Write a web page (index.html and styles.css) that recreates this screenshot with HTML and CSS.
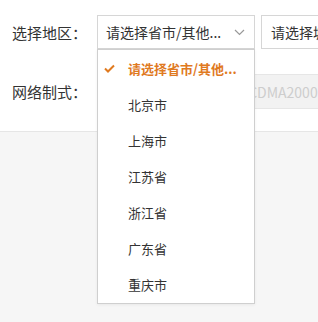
FILE: index.html
```html
<!DOCTYPE html>
<html lang="zh-CN">
<head>
<meta charset="utf-8">
<link rel="stylesheet" href="styles.css">
</head>
<body>
<div class="panel">
  <div class="row row-region">
    <span class="label">选择地区：</span>
    <div class="select select-open">
      <span class="select-text">请选择省市/其他...</span>
      <svg class="chevron" width="11" height="7" viewBox="0 0 11 7"><path d="M1 1 L5.5 5.5 L10 1" fill="none" stroke="#999" stroke-width="1.2"/></svg>
      <ul class="dropdown">
        <li class="option selected">
          <svg class="check" width="11" height="9" viewBox="0 0 11 9"><path d="M1 4.5 L4 7.5 L10 1.5" fill="none" stroke="#e07a1f" stroke-width="2"/></svg>
          请选择省市/其他...
        </li>
        <li class="option">北京市</li>
        <li class="option">上海市</li>
        <li class="option">江苏省</li>
        <li class="option">浙江省</li>
        <li class="option">广东省</li>
        <li class="option">重庆市</li>
      </ul>
    </div>
    <div class="select select-second">
      <span class="select-text">请选择城市...</span>
    </div>
  </div>
  <div class="row row-network">
    <span class="label">网络制式：</span>
    <div class="input-disabled">电信 CDMA2000</div>
  </div>
</div>
<div class="rest"></div>
</body>
</html>
```
FILE: styles.css
```css
html, body {
  margin: 0;
  padding: 0;
  background: #f6f6f6;
  font-family: "Noto Sans CJK SC", "Liberation Sans", sans-serif;
  color: #333;
  overflow: hidden;
}
.panel {
  background: #fff;
  height: 132px;
  border-bottom: 1px solid #e6e6e6;
  padding-top: 15px;
  box-sizing: border-box;
}
.row {
  display: flex;
  align-items: center;
  white-space: nowrap;
}
.row-region {
  height: 34px;
}
.row-network {
  height: 35px;
  margin-top: 25px;
}
.label {
  width: 97px;
  padding-left: 12px;
  box-sizing: border-box;
  font-size: 15px;
  flex: none;
}
.select {
  position: relative;
  height: 34px;
  border: 1px solid #d6d6d6;
  box-sizing: border-box;
  display: flex;
  align-items: center;
  font-size: 14px;
  flex: none;
  background: #fff;
}
.select-open {
  width: 158px;
  padding-left: 8px;
}
.select-second {
  width: 120px;
  margin-left: 6px;
  padding-left: 9px;
}
.chevron {
  position: absolute;
  right: 9px;
  top: 13px;
}
.dropdown {
  position: absolute;
  left: -1px;
  top: 33px;
  width: 158px;
  box-sizing: border-box;
  margin: 0;
  padding: 0 0 1px;
  list-style: none;
  background: #fff;
  border: 1px solid #cfcfcf;
  box-shadow: 0 1px 3px rgba(0,0,0,0.06);
  z-index: 5;
}
.option {
  height: 36px;
  display: flex;
  align-items: center;
  padding-left: 30px;
  font-size: 13px;
  color: #333;
  position: relative;
}
.option.selected {
  color: #e07a1f;
  font-weight: bold;
}
.check {
  position: absolute;
  left: 6px;
  top: 14px;
}
.input-disabled {
  flex: none;
  width: 260px;
  height: 35px;
  background: #f2f2f2;
  border: 1px solid #e6e6e6;
  box-sizing: border-box;
  display: flex;
  align-items: center;
  padding-left: 119px;
  color: #cdcdcd;
  font-size: 14px;
}
.rest {
  height: 200px;
}
```
